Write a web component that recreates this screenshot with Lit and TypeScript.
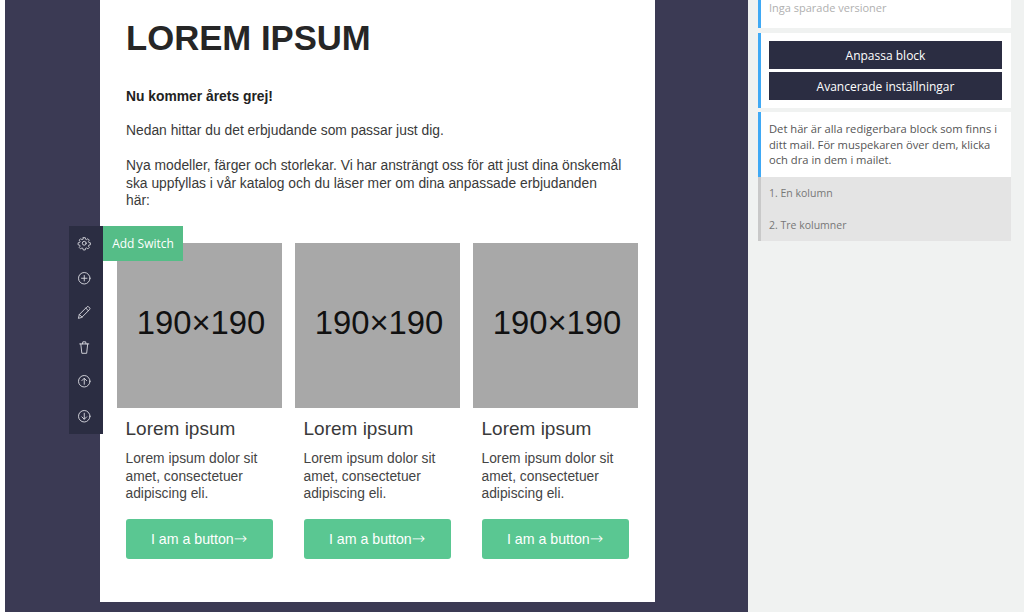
import { LitElement, html, css, svg } from "lit";
import { customElement } from "lit/decorators.js";

const icons = [
  svg`<circle cx="12" cy="12" r="3.2"/><path d="M10.2 2.5h3.6l.5 2.8 1.9.8 2.4-1.6 2.5 2.5-1.6 2.4.8 1.9 2.8.5v3.6l-2.8.5-.8 1.9 1.6 2.4-2.5 2.5-2.4-1.6-1.9.8-.5 2.8h-3.6l-.5-2.8-1.9-.8-2.4 1.6-2.5-2.5 1.6-2.4-.8-1.9-2.8-.5v-3.6l2.8-.5.8-1.9-1.6-2.4 2.5-2.5 2.4 1.6 1.9-.8z" transform="translate(12 12) scale(.92) translate(-12 -12.6)"/>`,
  svg`<circle cx="12" cy="12" r="9.5"/><path d="M12 7.5v9M7.5 12h9"/>`,
  svg`<path d="M2.5 21.5l1.4-5.8L16.5 3.1a2 2 0 0 1 2.8 0l1.6 1.6a2 2 0 0 1 0 2.8L8.3 20.1z"/><path d="M14.5 5.1l4.4 4.4M3.9 15.7l4.4 4.4"/>`,
  svg`<path d="M4.5 6.5h15M9 6.5l.7-3.5h4.6l.7 3.5M6.3 6.5L8 22h8l1.7-15.5"/>`,
  svg`<circle cx="12" cy="12" r="9.5"/><path d="M12 17V7.5M8 11l4-4 4 4"/>`,
  svg`<circle cx="12" cy="12" r="9.5"/><path d="M12 7v9.5M8 13l4 4 4-4"/>`,
];

@customElement("app-root")
export class AppRoot extends LitElement {
  static styles = css`
    :host {
      display: block;
      width: 1024px;
      height: 612px;
      overflow: hidden;
      background: #fff;
      font-family: "Liberation Sans", Arial, sans-serif;
    }
    .page {
      display: grid;
      grid-template-columns: 743px 276px;
      margin-left: 5px;
      height: 612px;
      position: relative;
    }
    .canvas {
      background: #3b3a54;
      padding-left: 95px;
      height: 612px;
      box-sizing: border-box;
    }
    .email {
      background: #fff;
      width: 555px;
      height: 602px;
      box-sizing: border-box;
      padding-top: 18px;
      color: #3a3a3a;
      overflow: hidden;
    }
    .intro {
      padding: 0 26px;
    }
    h1 {
      margin: 0 0 30px;
      font-size: 34.7px;
      line-height: 40px;
      font-weight: 700;
      color: #262626;
    }
    .intro p {
      margin: 0 0 17px;
      font-size: 13.85px;
      line-height: 17.5px;
      width: 497px;
    }
    .intro p.lead {
      margin-bottom: 16.5px;
      color: #222;
    }
    .intro p.mid {
      margin-bottom: 17.5px;
    }
    .cols {
      display: flex;
      gap: 13px;
      margin: 33.5px 0 0 17px;
    }
    .col {
      width: 165px;
    }
    .img {
      height: 165px;
      box-sizing: border-box;
      padding: 0 0 6px 3px;
      background: #a8a8a8;
      color: #111;
      font-size: 32.8px;
      display: flex;
      align-items: center;
      justify-content: center;
    }
    .body {
      padding: 0 8.5px;
    }
    h2 {
      margin: 10px 0 10px;
      font-size: 19px;
      line-height: 22px;
      font-weight: 400;
      color: #3a3a3a;
    }
    .body p {
      margin: 0;
      font-size: 13.8px;
      line-height: 17.5px;
      color: #444;
    }
    .btn {
      margin-top: 16px;
      width: 147px;
      height: 40px;
      border-radius: 3px;
      background: #5ac792;
      color: #fff;
      font-size: 14.2px;
      display: flex;
      align-items: center;
      justify-content: center;
    }
    .arrow {
      font-family: "DejaVu Sans", sans-serif;
      font-size: 16px;
      font-weight: 200;
    }
    .side {
      background: #f0f2f1;
      padding: 0 13px 0 10px;
      font-family: "Open Sans", sans-serif;
      display: flex;
      flex-direction: column;
      align-items: stretch;
    }
    .panel {
      background: #fff;
      border-left: 3px solid #3fa9f5;
      box-sizing: border-box;
    }
    .versions {
      height: 28px;
      margin-bottom: 5px;
      padding-left: 8px;
      font-size: 11px;
      line-height: 15px;
      color: #b0b0b0;
    }
    .actions {
      height: 75px;
      margin-bottom: 4px;
      padding: 8px 9px 0 8px;
      display: flex;
      flex-direction: column;
      gap: 3px;
    }
    .actions div {
      height: 28px;
      background: #2b2d42;
      color: #fff;
      font-size: 12px;
      font-weight: 500;
      display: flex;
      align-items: center;
      justify-content: center;
    }
    .info {
      height: 65px;
      padding: 9px 8px 0;
      font-size: 11.2px;
      line-height: 15.7px;
      color: #555;
    }
    .list {
      background: #e4e4e4;
      border-left: 3px solid #c9c9c9;
      height: 64px;
      box-sizing: border-box;
      padding: 8px 8px 0;
      font-size: 10.5px;
      color: #777;
    }
    .list div {
      height: 32px;
      line-height: 16px;
    }
    .tools {
      position: absolute;
      left: 64px;
      top: 226px;
      width: 34px;
      height: 208px;
      background: #2b2d42;
      display: flex;
      flex-direction: column;
      padding: 0;
    }
    .tools span {
      height: 34.6px;
      padding-right: 4px;
      display: flex;
      align-items: center;
      justify-content: center;
    }
    .tools svg {
      width: 14.5px;
      height: 14.5px;
      fill: none;
      stroke: #dcdce2;
      stroke-width: 1.5;
      stroke-linejoin: round;
      stroke-linecap: round;
    }
    .add {
      position: absolute;
      left: 98px;
      top: 226px;
      width: 80px;
      height: 35px;
      background: #55bd87;
      color: #fff;
      font-family: "Open Sans", sans-serif;
      font-size: 12px;
      display: flex;
      align-items: center;
      justify-content: center;
    }
  `;

  render() {
    return html`<div class="page">
      <div class="canvas">
        <div class="email">
          <div class="intro">
            <h1>LOREM IPSUM</h1>
            <p class="lead"><b>Nu kommer årets grej!</b></p>
            <p class="mid">Nedan hittar du det erbjudande som passar just dig.</p>
            <p>Nya modeller, färger och storlekar. Vi har ansträngt oss för att just dina önskemål ska uppfyllas i vår katalog och du läser mer om dina anpassade erbjudanden här:</p>
          </div>
          <div class="cols">
            ${[0, 1, 2].map(
              () => html`<div class="col">
                <div class="img">190×190</div>
                <div class="body">
                  <h2>Lorem ipsum</h2>
                  <p>Lorem ipsum dolor sit<br />amet, consectetuer<br />adipiscing eli.</p>
                  <div class="btn"><span>I am a button<span class="arrow">→</span></span></div>
                </div>
              </div>`
            )}
          </div>
        </div>
      </div>
      <aside class="side">
        <div class="panel versions">Inga sparade versioner</div>
        <div class="panel actions">
          <div>Anpassa block</div>
          <div>Avancerade inställningar</div>
        </div>
        <div class="panel info">Det här är alla redigerbara block som finns i ditt mail. För muspekaren över dem, klicka och dra in dem i mailet.</div>
        <div class="list"><div>1. En kolumn</div><div>2. Tre kolumner</div></div>
      </aside>
      <div class="tools">
        ${icons.map((i) => html`<span><svg viewBox="0 0 24 24">${i}</svg></span>`)}
      </div>
      <div class="add">Add Switch</div>
    </div>`;
  }
}
